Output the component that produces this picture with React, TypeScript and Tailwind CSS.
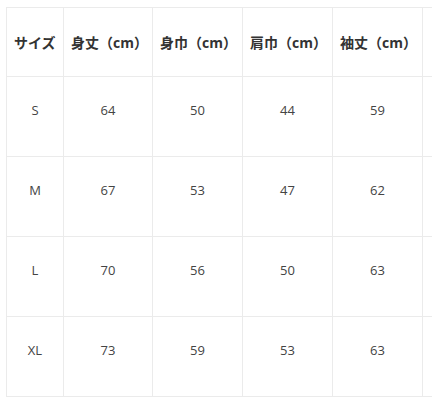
const headers = ["サイズ", "身丈（cm）", "身巾（cm）", "肩巾（cm）", "袖丈（cm）", ""];

const rows = [
  ["S", "64", "50", "44", "59", ""],
  ["M", "67", "53", "47", "62", ""],
  ["L", "70", "56", "50", "63", ""],
  ["XL", "73", "59", "53", "63", ""],
];

const widths = ["w-[57px]", "w-[89px]", "w-[90px]", "w-[90px]", "w-[90px]", "w-[90px]"];

export default function App() {
  return (
    <main
      className="h-[406px] w-[432px] overflow-hidden bg-white pl-[6px] pt-[7px]"
      style={{ fontFamily: '"Open Sans", "Noto Sans CJK JP", sans-serif' }}
    >
      <table className="w-[506px] table-fixed border-collapse">
        <colgroup>
          {widths.map((w, i) => (
            <col key={i} className={w} />
          ))}
        </colgroup>
        <thead>
          <tr className="h-[69px]">
            {headers.map((h, i) => (
              <th
                key={i}
                className="border border-[#ebebeb] px-[7px] text-left text-[14px] font-bold whitespace-nowrap text-[#333333]"
              >
                {h}
              </th>
            ))}
          </tr>
        </thead>
        <tbody>
          {rows.map((row) => (
            <tr key={row[0]} className="h-[80px]">
              {row.map((cell, i) => (
                <td
                  key={i}
                  className="border border-[#ebebeb] pb-[12px] text-center text-[13px] text-[#444444]"
                >
                  {cell}
                </td>
              ))}
            </tr>
          ))}
        </tbody>
      </table>
    </main>
  );
}
